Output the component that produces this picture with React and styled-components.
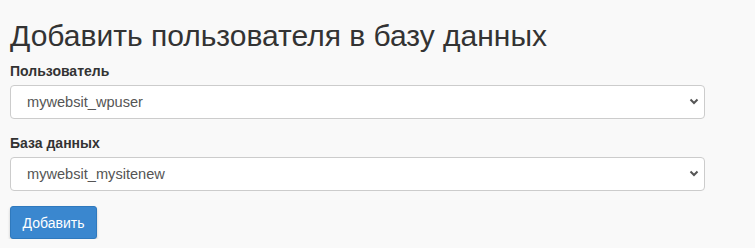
import React from "react"
import styled, { createGlobalStyle } from "styled-components"

const GlobalStyle = createGlobalStyle`
  html, body {
    margin: 0;
    padding: 0;
    background: #f9f9f9;
  }
  body {
    font-family: "Liberation Sans", Arial, sans-serif;
    color: #333;
  }
`

const Page = styled.div`
  padding: 18px 10px 0 10px;
  width: 695px;
`

const Title = styled.h1`
  margin: 0 0 7px 0;
  font-size: 30px;
  line-height: 36px;
  font-weight: 400;
  color: #333;
`

const Group = styled.div`
  margin-bottom: ${(p) => p.gap || 14}px;
`

const Label = styled.label`
  display: block;
  font-size: 14px;
  line-height: 20px;
  font-weight: 700;
  color: #333;
  margin-bottom: 4px;
`

const SelectWrap = styled.div`
  position: relative;
`

const Select = styled.select`
  display: block;
  width: 100%;
  height: 34px;
  box-sizing: border-box;
  padding: 0 28px 0 16px;
  font-family: "Liberation Sans", Arial, sans-serif;
  font-size: 14.6px;
  color: #555;
  background: #fff;
  border: 1px solid #ccc;
  border-radius: 4px;
  appearance: none;
  outline: none;
`

const Chevron = styled.svg`
  position: absolute;
  right: 6px;
  top: 13px;
  pointer-events: none;
`

const Button = styled.button`
  height: 33px;
  width: 87px;
  padding: 0;
  font-family: "Liberation Sans", Arial, sans-serif;
  font-size: 14px;
  color: #fff;
  background: #3a87cf;
  border: 1px solid #2f79bd;
  border-radius: 3px;
  box-shadow: 0 2px 3px rgba(0, 0, 0, 0.2);
  cursor: pointer;
`

function Dropdown({ value }) {
  return (
    <SelectWrap>
      <Select defaultValue={value}>
        <option value={value}>{value}</option>
      </Select>
      <Chevron width="10" height="7" viewBox="0 0 10 7">
        <path d="M1.5 1.5 L5 5 L8.5 1.5" fill="none" stroke="#555" strokeWidth="2" />
      </Chevron>
    </SelectWrap>
  )
}

export default function App() {
  return (
    <>
      <GlobalStyle />
      <Page>
        <Title>Добавить пользователя в базу данных</Title>
        <Group>
          <Label>Пользователь</Label>
          <Dropdown value="mywebsit_wpuser" />
        </Group>
        <Group gap={15}>
          <Label>База данных</Label>
          <Dropdown value="mywebsit_mysitenew" />
        </Group>
        <Button>Добавить</Button>
      </Page>
    </>
  )
}
